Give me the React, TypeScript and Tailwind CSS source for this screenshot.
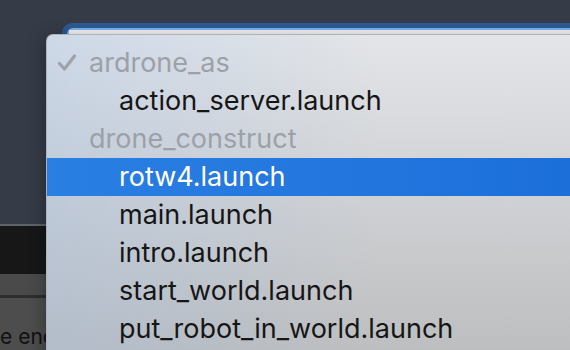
const groups = [
  { name: 'ardrone_as', checked: true, items: ['action_server.launch'] },
  {
    name: 'drone_construct',
    checked: false,
    items: ['rotw4.launch', 'main.launch', 'intro.launch', 'start_world.launch', 'put_robot_in_world.launch'],
  },
]

function Check() {
  return (
    <svg width="20" height="20" viewBox="0 0 20 20" className="shrink-0">
      <path d="M2.5 10.5 L7.5 16 L17.5 3" fill="none" stroke="#9ea3aa" strokeWidth="3.2" strokeLinecap="round" strokeLinejoin="round" />
    </svg>
  )
}

export default function App() {
  const selected = 'rotw4.launch'

  return (
    <div className="relative w-[570px] h-[350px] overflow-hidden bg-[#353b47] font-['Inter',sans-serif]">
      {/* page behind the open menu */}
      <div className="flex flex-col h-full">
        <div className="h-[228px] pt-[23px] pl-[62px]">
          <div className="rounded-tl-[10px] bg-[#2c5a92] pt-[5px] pl-[5px] h-full">
            <div className="rounded-tl-[6px] bg-[#7db3ef] pt-[2px] pl-[2px] h-full">
              <div className="bg-[#f4f4f4] h-full" />
            </div>
          </div>
        </div>
        <div className="h-[2px] bg-[#5e636c]" />
        <div className="h-[49px] bg-[#171717]" />
        <div className="h-[22px] bg-[#4a4a4a]" />
        <div className="h-[3px] bg-[#2e2e2e]" />
        <div className="flex-1 bg-[#4d4d4d] pt-[26px] text-[21px] leading-[26px] text-[#111] whitespace-nowrap">
          e enc
        </div>
      </div>

      {/* popup menu */}
      <div className="absolute left-[46px] top-[34px] w-[600px] h-[400px] rounded-[7px] border-l border-t border-[#aeb3ba] shadow-[0_4px_18px_rgba(0,0,0,0.35)] bg-[linear-gradient(to_right,rgba(150,185,230,0.28),rgba(150,185,230,0)_55%),linear-gradient(to_bottom,#e3e5e8,#cfd1d4_40%,#b4b4b4)] pt-[9px]">
        {groups.map((g) => (
          <div key={g.name}>
            <div className="flex items-center h-[38px] pl-[10px] text-[27px] text-[#9ca1a8]">
              <div className="w-[32px]">{g.checked && <Check />}</div>
              <span>{g.name}</span>
            </div>
            {g.items.map((item) => (
              <div
                key={item}
                className={
                  item === selected
                    ? 'flex items-center h-[38px] pl-[72px] text-[27px] text-white bg-[linear-gradient(to_right,#2a7fe3,#1a6dd8)]'
                    : 'flex items-center h-[38px] pl-[72px] text-[27px] text-[#161616]'
                }
              >
                {item}
              </div>
            ))}
          </div>
        ))}
      </div>
    </div>
  )
}
